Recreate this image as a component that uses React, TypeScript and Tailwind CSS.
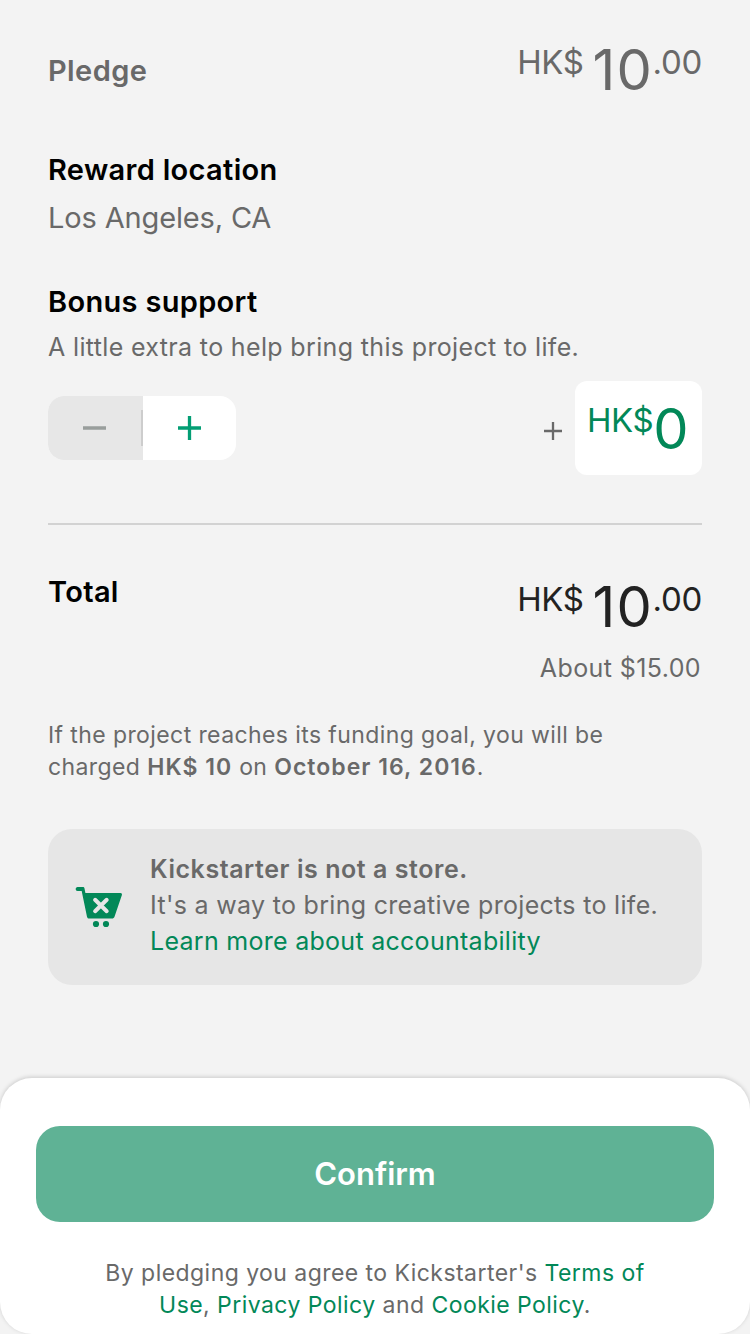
import React from "react";

function Amount() {
  return (
    <div className="flex items-start">
      <span className="mt-[3px] mr-[9px] text-[33px] leading-10 tracking-[-0.4px]">HK$</span>
      <span className="mt-px mr-[-0.5px] text-[56px] leading-[60px] tracking-[1.2px]">10</span>
      <span className="mt-[3px] text-[33px] leading-10 tracking-[-0.3px]">.00</span>
    </div>
  );
}

function Heading({ children }: { children: React.ReactNode }) {
  return <h2 className="text-[29px] leading-9 font-semibold tracking-[0.32px] text-black">{children}</h2>;
}

function CartIcon() {
  return (
    <svg className="h-[42px] w-12" viewBox="0 0 48 42" fill="none" aria-hidden="true">
      <path d="M2.6 1h5.2c.9 0 1.5.5 1.7 1.4L10.4 7h35.1c1.1 0 1.7.9 1.4 1.9l-7.4 21.9c-.4 1.2-1.3 1.8-2.5 1.8H14.3c-1.2 0-2-.7-2.3-1.9L7.4 8.5 6.7 5H2.6C.1 5 .1 1 2.6 1Z" fill="#028858" />
      <path d="m20.1 13.8 11.6 11.4m0-11.4L20.1 25.2" stroke="#e6e6e6" strokeWidth="4" strokeLinecap="round" />
      <circle cx="21" cy="38" r="3.1" fill="#028858" />
      <circle cx="31" cy="38" r="3.1" fill="#028858" />
    </svg>
  );
}

export default function App() {
  return (
    <main className="flex h-[1334px] w-[750px] flex-col overflow-hidden bg-[#f3f3f3] font-['Inter',sans-serif] text-[#696969]">
      <div className="flex h-[1078px] flex-col px-12">
        <div className="flex h-[113px] justify-between pt-[39px]">
          <h2 className="mt-[14px] text-[29px] leading-9 font-semibold tracking-[0.4px]">Pledge</h2>
          <Amount />
        </div>

        <section className="mt-[39px]">
          <Heading>Reward location</Heading>
          <p className="mt-3 text-[29px] leading-9 tracking-[-0.15px]">Los Angeles, CA</p>
        </section>

        <section className="mt-12">
          <Heading>Bonus support</Heading>
          <p className="mt-[11px] text-[25px] leading-8 tracking-[0.35px]">A little extra to help bring this project to life.</p>
          <div className="mt-[18px] flex h-[94px] items-center justify-between">
            <div className="flex h-16 w-[188px] overflow-hidden rounded-2xl bg-white">
              <button aria-label="Decrease" className="flex w-[95px] items-center justify-end bg-[#e7e7e7]">
                <svg className="h-6 w-[23px]" viewBox="0 0 23 24" aria-hidden="true">
                  <path d="M0 12h23" stroke="#999e9c" strokeWidth="3.3" />
                </svg>
                <span className="ml-[35px] h-9 w-0.5 bg-[#cdcdcd]" />
              </button>
              <button aria-label="Increase" className="flex flex-1 items-center justify-center">
                <svg className="h-6 w-[23px]" viewBox="0 0 23 24" aria-hidden="true">
                  <path d="M0 12h23M11.5 0v24" stroke="#039e74" strokeWidth="3.3" />
                </svg>
              </button>
            </div>
            <div className="flex items-center">
              <svg className="mt-[5px] mr-[13px] h-[18px] w-[18px]" viewBox="0 0 18 18" aria-hidden="true">
                <path d="M0 9h18M9 0v18" stroke="#696969" strokeWidth="2.3" />
              </svg>
              <div className="flex h-[94px] w-[127px] items-start rounded-xl bg-white pl-3 text-[#028858]">
                <span className="mt-[19px] text-[33px] leading-10 tracking-[-0.4px]">HK$</span>
                <span className="mt-[18px] text-[56px] leading-[60px]">0</span>
              </div>
            </div>
          </div>
        </section>

        <hr className="mt-12 h-0.5 border-0 bg-[#d2d2d2]" />

        <section className="mt-[49px]">
          <div className="flex h-[61px] justify-between">
            <Heading>Total</Heading>
            <div className="pt-0.5 text-[#222222]"><Amount /></div>
          </div>
          <p className="mt-[17px] pr-px text-right text-[25px] leading-8 tracking-[0.4px]">About $15.00</p>
          <p className="mt-[35px] text-[23px] leading-8 tracking-[0.4px]">
            If the project reaches its funding goal, you will be<br />
            charged <b className="font-semibold tracking-[1.05px]">HK$ 10</b> on <b className="font-semibold tracking-[1.03px]">October 16, 2016</b>.
          </p>
        </section>

        <aside className="mt-[46px] flex h-[156px] items-center rounded-[24px] bg-[#e6e6e6] pl-[27px]">
          <CartIcon />
          <div className="mt-[-4px] ml-[27px] text-[25px] leading-9 tracking-[0.31px]">
            <h3 className="font-semibold tracking-[0.56px]">Kickstarter is not a store.</h3>
            <p>It's a way to bring creative projects to life.</p>
            <a className="block tracking-[0.28px] text-[#028858]">Learn more about accountability</a>
          </div>
        </aside>
      </div>

      <footer className="h-64 rounded-[32px] bg-white px-9 pt-12 shadow-[0_-1px_4px_rgba(0,0,0,0.17)]">
        <button className="h-24 w-full rounded-[24px] bg-[#5fb295] text-[31px] font-semibold text-white">Confirm</button>
        <p className="mt-[35px] text-center text-[23px] leading-8 tracking-[0.45px]">
          By pledging you agree to Kickstarter's <a className="text-[#028858]">Terms of<br />Use</a>, <a className="text-[#028858]">Privacy Policy</a> and <a className="text-[#028858]">Cookie Policy</a>.
        </p>
      </footer>
    </main>
  );
}
